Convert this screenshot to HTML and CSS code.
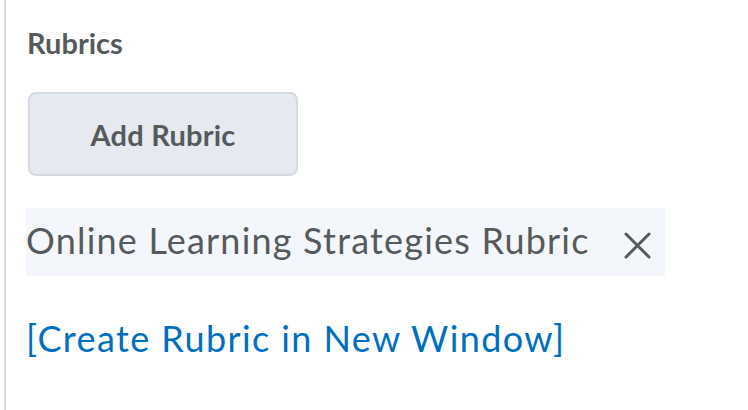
FILE: index.html
```html
<!DOCTYPE html>
<html>
<head>
<meta charset="utf-8">
<link rel="stylesheet" href="styles.css">
</head>
<body>
<div class="panel">
  <h2 class="label">Rubrics</h2>
  <button class="btn" type="button">Add Rubric</button>
  <div class="attached">
    <span class="attached-name">Online Learning Strategies Rubric</span>
    <span class="remove" aria-label="Remove">
      <svg width="27" height="27" viewBox="0 0 27 27"><path d="M2 2 L25 25 M25 2 L2 25" stroke="#565a5c" stroke-width="3" stroke-linecap="round" fill="none"/></svg>
    </span>
  </div>
  <a class="link" href="#">[Create Rubric in New Window]</a>
</div>
</body>
</html>
```

FILE: styles.css
```css
html, body {
  margin: 0;
  padding: 0;
  background: #ffffff;
}
body {
  font-family: Lato, "Open Sans", sans-serif;
  width: 748px;
  height: 410px;
  overflow: hidden;
}
.panel {
  margin-left: 4px;
  border-left: 2px solid #d3d9e3;
  height: 410px;
  box-sizing: border-box;
  padding: 26px 0 0 20px;
  display: flex;
  flex-direction: column;
  align-items: flex-start;
}
.label {
  margin: 0 0 0 1px;
  font-size: 29px;
  line-height: 34px;
  font-weight: 700;
  color: #565a5c;
}
.btn {
  margin: 32px 0 0 2px;
  width: 270px;
  height: 84px;
  box-sizing: border-box;
  background: #e6e9f0;
  border: 2px solid #d3d9e3;
  border-radius: 8px;
  font-family: Lato, sans-serif;
  font-size: 29px;
  font-weight: 700;
  letter-spacing: 0.2px;
  color: #565a5c;
  padding: 0;
}
.attached {
  margin-top: 32px;
  height: 68px;
  width: 639px;
  box-sizing: border-box;
  background: #f3f7fb;
  display: flex;
  align-items: center;
}
.attached-name {
  font-size: 36px;
  line-height: 64px;
  padding-bottom: 4px;
  letter-spacing: 1.2px;
  color: #565a5c;
}
.remove {
  display: flex;
  margin-left: 34px;
  margin-top: 6px;
}
.link {
  margin-top: 42px;
  font-size: 36px;
  line-height: 41px;
  letter-spacing: 1.4px;
  color: #006fbf;
  text-decoration: none;
}
```
